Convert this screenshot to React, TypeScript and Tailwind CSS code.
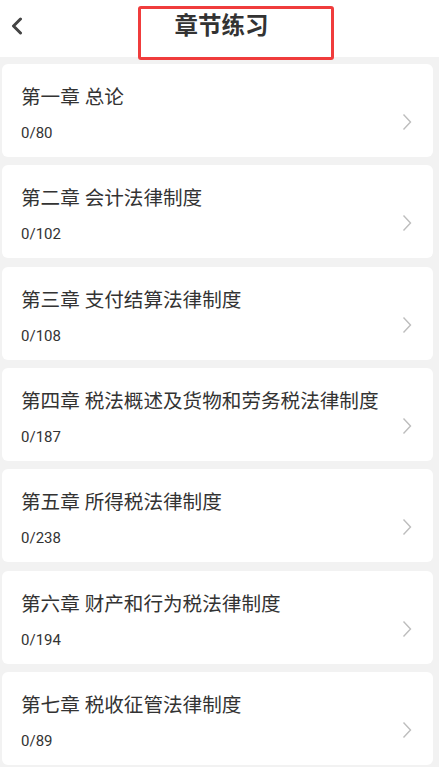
const chapters = [
  { title: "第一章 总论", done: 0, total: 80 },
  { title: "第二章 会计法律制度", done: 0, total: 102 },
  { title: "第三章 支付结算法律制度", done: 0, total: 108 },
  { title: "第四章 税法概述及货物和劳务税法律制度", done: 0, total: 187 },
  { title: "第五章 所得税法律制度", done: 0, total: 238 },
  { title: "第六章 财产和行为税法律制度", done: 0, total: 194 },
  { title: "第七章 税收征管法律制度", done: 0, total: 89 },
];

export default function App() {
  return (
    <div
      className="relative h-[767px] overflow-hidden bg-[#f2f2f2] text-[#333]"
      style={{ fontFamily: "Roboto, 'Noto Sans CJK SC', sans-serif" }}
    >
      {/* Header */}
      <div className="relative flex h-[57px] items-center justify-center bg-white">
        <button className="absolute left-[8px] top-[16px] flex h-[20px] w-[16px] items-center justify-center">
          <svg width="13" height="18" viewBox="0 0 13 18" fill="none">
            <path
              d="M10.5 2 L3.5 9 L10.5 16"
              stroke="#444"
              strokeWidth="3"
              strokeLinecap="round"
              strokeLinejoin="round"
            />
          </svg>
        </button>
        <h1 className="ml-[4px] -mt-[4px] text-[23.5px] font-bold">章节练习</h1>
      </div>

      {/* annotation box */}
      <div className="absolute left-[138px] top-[6px] h-[54px] w-[196px] rounded-[3px] border-[3px] border-[#f03c3c]" />

      {/* Chapter list */}
      <div className="mt-[7px] ml-[2px] mr-[6px] flex flex-col gap-[8.33px]">
        {chapters.map((c, i) => (
          <div
            key={i}
            className="flex h-[93px] shrink-0 rounded-[6px] bg-white pl-[19px] pr-[21px]"
          >
            <div className="flex flex-1 flex-col pt-[21px]">
              <div className="text-[19.6px] leading-[26px]">{c.title}</div>
              <div className="mt-[12px] text-[15px] leading-[20px]">
                {c.done}/{c.total}
              </div>
            </div>
            <svg
              className="mt-[49px]"
              width="10"
              height="18"
              viewBox="0 0 10 18"
              fill="none"
            >
              <path d="M1.5 1.5 L8.5 9 L1.5 16.5" stroke="#bdbdbd" strokeWidth="1.4" />
            </svg>
          </div>
        ))}
      </div>
    </div>
  );
}
